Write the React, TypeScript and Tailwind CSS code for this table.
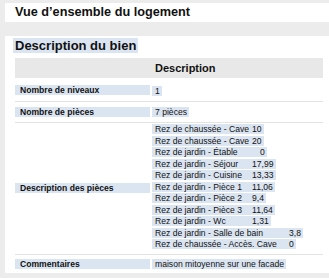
const HL = "bg-[#dbe5f1]";

type Piece = { name: string; value: string; nameW: string; pad?: string };

const pieces: Piece[] = [
  { name: "Rez de chaussée - Cave", value: "10", nameW: "w-[97px]" },
  { name: "Rez de chaussée - Cave", value: "20", nameW: "w-[97px]" },
  { name: "Rez de jardin - Étable", value: "0", nameW: "w-[97px]", pad: "pl-[8px]" },
  { name: "Rez de jardin - Séjour", value: "17,99", nameW: "w-[97px]" },
  { name: "Rez de jardin - Cuisine", value: "13,33", nameW: "w-[97px]" },
  { name: "Rez de jardin - Pièce 1", value: "11,06", nameW: "w-[97px]" },
  { name: "Rez de jardin - Pièce 2", value: "9,4", nameW: "w-[97px]" },
  { name: "Rez de jardin - Pièce 3", value: "11,64", nameW: "w-[97px]" },
  { name: "Rez de jardin - Wc", value: "1,31", nameW: "w-[97px]" },
  { name: "Rez de jardin - Salle de bain", value: "3,8", nameW: "w-[134px]" },
  { name: "Rez de chaussée - Accès. Cave", value: "0", nameW: "w-[134px]" },
];

function Label({ children }: { children: React.ReactNode }) {
  return (
    <td className="w-[137px] p-0 pr-[2px] align-middle">
      <div className={`${HL} pl-[5px] font-bold leading-[10px]`}>{children}</div>
    </td>
  );
}

function Value({ children }: { children: React.ReactNode }) {
  return <span className={`${HL} pl-[3px] pr-[2px]`}>{children}</span>;
}

export default function App() {
  return (
    <div className="min-h-[278px] bg-[#ececec] pl-[5px] pt-[3px] font-['Liberation_Sans',Arial,sans-serif] text-[#111]">
      <div className="flex h-[19px] items-center bg-white pl-[10px]">
        <h1 className="text-[12.7px] font-bold leading-none">Vue d’ensemble du logement</h1>
      </div>

      <div className="mt-[14px] bg-white pl-[8px] pt-[2px]">
        <h2 className="text-[13px] font-bold leading-[16px]">
          <span className={`${HL} px-[2px]`}>Description du bien</span>
        </h2>

        <table className="ml-[2px] mt-[4px] w-[calc(100%-8px)] border-collapse text-[8.6px]">
          <thead>
            <tr className="h-[20px] bg-[#e8e8e8]">
              <th className="w-[137px] p-0" />
              <th className="p-0 pl-[3px] text-left text-[11px] font-bold">Description</th>
            </tr>
          </thead>
          <tbody>
            <tr className="border-b border-[#e3e3e3]">
              <Label>Nombre de niveaux</Label>
              <td className="pb-[4px] pt-[8px] leading-[11px]">
                <Value>1</Value>
              </td>
            </tr>
            <tr className="border-b border-[#e3e3e3]">
              <Label>Nombre de pièces</Label>
              <td className="pb-[4px] pt-[5px] leading-[11px]">
                <Value>7 pièces</Value>
              </td>
            </tr>
            <tr className="border-b border-[#e3e3e3]">
              <Label>Description des pièces</Label>
              <td className="pb-[3px] pt-[1px]">
                {pieces.map((p, i) => (
                  <div key={i} className="whitespace-nowrap leading-[11.5px]">
                    <Value>
                      <span className={`inline-block ${p.nameW}`}>{p.name}</span>
                      <span className={p.pad}>{p.value}</span>
                    </Value>
                  </div>
                ))}
              </td>
            </tr>
            <tr>
              <Label>Commentaires</Label>
              <td className="pb-[3px] pt-[4px] leading-[11px]">
                <Value>maison mitoyenne sur une facade</Value>
              </td>
            </tr>
          </tbody>
        </table>
      </div>
    </div>
  );
}
